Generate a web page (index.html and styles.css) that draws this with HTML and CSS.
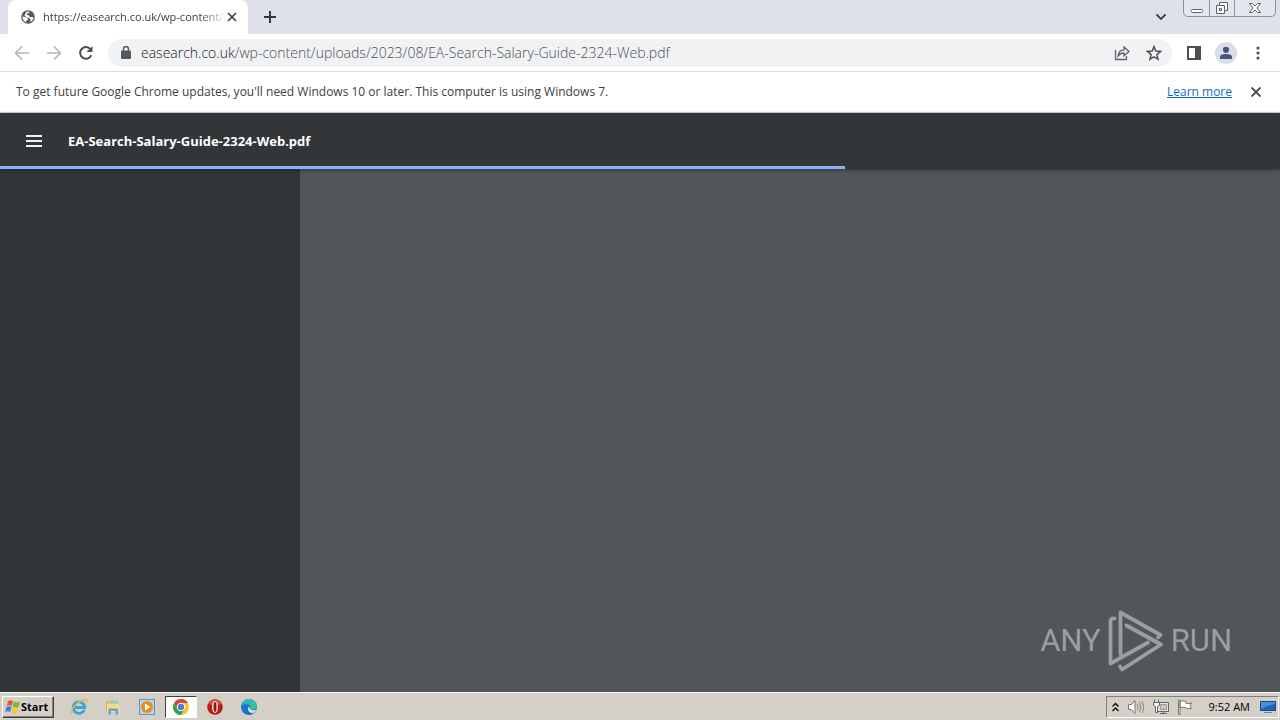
FILE: index.html
```html
<!DOCTYPE html>
<html lang="en">
<head>
<meta charset="utf-8">
<title>EA-Search-Salary-Guide-2324-Web.pdf</title>
<link rel="stylesheet" href="styles.css">
</head>
<body>
<header class="tabstrip">
  <div class="tab">
    <svg class="globe" width="14" height="14" viewBox="0 0 14 14"><circle cx="7" cy="7" r="6.800" fill="#55595e"/><path d="M1.500 6.500 5 7.200l2 1.600-.3 1.200-1.500.7.2 1.600C3 11.700 1.300 9.500 1.500 6.500ZM5.500 1.800 8.500 1.500 7.800 3 6 3.500 5.800 4.800 8 5.500 9 7.300 11 7l1.600.5c-.3 2-1.500 3.800-3.500 4.600l.6-2.300-2-2-2.500-.5-1.700-2Z" fill="#fff"/></svg>
    <span class="tab-title">https://easearch.co.uk/wp-content/</span>
    <button class="icon-btn tab-close" aria-label="Close tab"><svg width="10" height="10" viewBox="0 0 10 10"><path d="m1 1 8 8M9 1 1 9" stroke="#3c4043" stroke-width="1.700"/></svg></button>
  </div>
  <button class="icon-btn new-tab" aria-label="New tab"><svg width="14" height="14" viewBox="0 0 14 14"><path d="M7 1v12M1 7h12" stroke="#34383c" stroke-width="2"/></svg></button>
  <button class="icon-btn tab-search" aria-label="Search tabs"><svg width="12" height="8" viewBox="0 0 12 8"><path d="m1.500 1.500 4.500 4.500 4.500-4.500" fill="none" stroke="#3c4043" stroke-width="1.800"/></svg></button>
  <div class="window-controls">
    <button aria-label="Minimize"><svg width="14" height="14" viewBox="0 0 14 14"><rect x="1.500" y="8.500" width="11" height="3" rx="1" fill="#fff" stroke="#5e636b"/></svg></button>
    <button aria-label="Restore"><svg width="14" height="14" viewBox="0 0 14 14"><path d="M4.500 1.500h8v8h-3v3h-8v-8h3Z" fill="#fff" stroke="#5e636b"/><path d="M4.500 4.500h5v5M4.500 7.500h2v2h-2Z" fill="none" stroke="#5e636b"/></svg></button>
    <button class="wide" aria-label="Close"><svg width="14" height="14" viewBox="0 0 14 14"><path d="M1.500 2.500h3L7 5l2.500-2.500h3L9 7l3.500 4.500h-3L7 9l-2.500 2.500h-3L5 7Z" fill="#fff" stroke="#5e636b"/></svg></button>
  </div>
</header>
<nav class="toolbar">
  <button class="icon-btn" aria-label="Back"><svg width="16" height="16" viewBox="0 0 16 16"><path d="M15 8H2M8 1.500 1.500 8 8 14.500" fill="none" stroke="#b6b8bb" stroke-width="1.700"/></svg></button>
  <button class="icon-btn" aria-label="Forward"><svg width="16" height="16" viewBox="0 0 16 16"><path d="M1 8h13M8 1.500 14.500 8 8 14.500" fill="none" stroke="#b6b8bb" stroke-width="1.700"/></svg></button>
  <button class="icon-btn" aria-label="Reload"><svg width="16" height="16" viewBox="0 0 16 16"><path d="M13.300 10.200A5.800 5.800 0 1 1 12.500 4.300" fill="none" stroke="#4c5054" stroke-width="2"/><path d="M14.500 1v6h-6Z" fill="#4c5054"/></svg></button>
  <div class="omnibox">
    <svg width="10" height="13" viewBox="0 0 10 13"><rect y="4.500" width="10" height="8.500" rx="1" fill="#55595e"/><path d="M2.500 5V3a2.500 2.500 0 0 1 5 0v2" fill="none" stroke="#55595e" stroke-width="1.500"/></svg>
    <div class="url"><span class="host">easearch.co.uk</span>/wp-content/uploads/2023/08/EA-Search-Salary-Guide-2324-Web.pdf</div>
    <button class="icon-btn" aria-label="Share"><svg width="16" height="16" viewBox="0 0 16 16"><path d="M1.500 5v9.500h11V11" fill="none" stroke="#5f6368" stroke-width="1.300"/><path d="M4 11c.5-4 2.500-6 6-6.200V2l5 4.500-5 4.300V8C7.500 8 5.500 9 4 11Z" fill="none" stroke="#5f6368" stroke-width="1.300"/></svg></button>
    <button class="icon-btn" aria-label="Bookmark"><svg width="16" height="16" viewBox="0 0 16 16"><path d="m8 1.700 1.800 4.400 4.700.4-3.600 3.100 1.100 4.600L8 11.800l-4 2.400 1.100-4.600L1.500 6.500l4.700-.4Z" fill="none" stroke="#4c5054" stroke-width="1.500"/></svg></button>
  </div>
  <button class="icon-btn" aria-label="Side panel"><svg width="14" height="14" viewBox="0 0 14 14"><path d="M1 1h12v12H1Z" fill="#fff" stroke="#4c5054" stroke-width="2"/><path d="M8 1h5v12H8Z" fill="#4c5054"/></svg></button>
  <button class="icon-btn avatar" aria-label="Profile"><svg width="14" height="14" viewBox="0 0 14 14"><circle cx="7" cy="3.800" r="3.100" fill="#4a5677"/><path d="M1 13v-2C1 8.800 4 8 7 8s6 .8 6 3v2Z" fill="#4a5677"/></svg></button>
  <button class="icon-btn" aria-label="Menu"><svg width="4" height="14" viewBox="0 0 4 14"><g fill="#4c5054"><circle cx="2" cy="2" r="1.600"/><circle cx="2" cy="7" r="1.600"/><circle cx="2" cy="12" r="1.600"/></g></svg></button>
</nav>
<section class="infobar">
  <p>To get future Google Chrome updates, you'll need Windows 10 or later. This computer is using Windows 7.</p>
  <a href="#">Learn more</a>
  <button class="icon-btn" aria-label="Dismiss"><svg width="12" height="12" viewBox="0 0 12 12"><path d="m1.500 1.500 9 9M10.500 1.500l-9 9" stroke="#4c5054" stroke-width="1.800"/></svg></button>
</section>
<section class="pdf-bar">
  <button class="icon-btn" aria-label="Toggle sidebar"><svg width="16" height="12" viewBox="0 0 16 12"><path d="M0 1h16M0 6h16M0 11h16" stroke="#f1f3f4" stroke-width="2"/></svg></button>
  <h1>EA-Search-Salary-Guide-2324-Web.pdf</h1>
  <div class="progress"></div>
</section>
<main class="viewer">
  <aside class="sidebar"></aside>
  <div class="page-area">
    <div class="watermark">
      <span>ANY</span>
      <svg width="56" height="64" viewBox="0 0 56 64"><g fill="none" stroke="#9b9fa1" stroke-width="3.800" stroke-linejoin="round" stroke-linecap="round"><path d="M12.500 45V3.500L52.500 26 50 28.500"/><path d="M6.500 9.500Q2.500 8.500 2.500 13v41.500L40 33.500"/><path d="M18.500 16.500 53 35.500 14 60.500 12 57.500"/></g></svg>
      <span>RUN</span>
    </div>
  </div>
</main>
<footer class="taskbar">
  <button class="start"><svg width="16" height="16" viewBox="0 0 16 16"><path d="M3 2q2.500-1.500 5 0L6.800 7q-2.500-1.400-5 0Z" fill="#e8582c"/><path d="M9 2.500q2.500 1.600 6 .3L13.500 8q-3 1.200-5.700-.5Z" fill="#78b833"/><path d="M1.500 8q2.500-1.400 5 0L5.200 13q-2.500-1.500-5 0Z" fill="#3a83d3"/><path d="M7.500 8.600q2.700 1.600 5.700.4L11.800 14q-3 1.200-5.600-.6Z" fill="#f8c628"/></svg>Start</button>
  <button class="task" aria-label="Internet Explorer"><svg width="18" height="18" viewBox="0 0 18 18"><path d="M14.200 12A5.700 5.700 0 1 1 14.700 9.500H5" fill="none" stroke="#36a2df" stroke-width="2.800"/><path d="M2 16C-1 13 7 3 15 1.500c3-.3 2 3 1 4" fill="none" stroke="#e7b83c" stroke-width="1.300"/></svg></button>
  <button class="task" aria-label="Explorer"><svg width="18" height="18" viewBox="0 0 18 18"><path d="M2 3h5l1 1.500h7V14H2Z" fill="#dfb94c"/><path d="M3 5.500h12.500V14H3Z" fill="#f4dc88"/><path d="M7 2.500h7v3H7Z" fill="#8fc9ce"/><path d="M4.500 16.500v-6h9.500v6h-2.500V13H7v3.500Z" fill="#5fa9d4"/></svg></button>
  <button class="task" aria-label="Media Player"><svg width="18" height="18" viewBox="0 0 18 18"><rect x="1.500" y="1.500" width="15" height="15" fill="#b5d6ea" stroke="#5797c2"/><circle cx="9" cy="9" r="6" fill="#f08a1d"/><path d="m7 5.500 5.500 3.500L7 12.500Z" fill="#fff"/></svg></button>
  <button class="task active" aria-label="Chrome"><svg width="18" height="18" viewBox="0 0 18 18"><circle cx="9" cy="9" r="8" fill="#fbc62d"/><path d="M9 9 5.500 11 2.070 5A8 8 0 0 1 15.930 5H9Z" fill="#dd4436"/><path d="M2.070 5A8 8 0 0 0 9 17l3.500-6H5.500Z" fill="#2fa24f"/><circle cx="9" cy="9" r="4.200" fill="#fff"/><circle cx="9" cy="9" r="3.200" fill="#3f7fe0"/></svg></button>
  <button class="task" aria-label="Opera"><svg width="18" height="18" viewBox="0 0 18 18"><circle cx="9" cy="9" r="7.800" fill="#b81c19"/><path d="M2 6a8 8 0 0 1 14 0Q9 8 2 6Z" fill="#d4504b"/><ellipse cx="9" cy="9" rx="3" ry="6" fill="#f7e5df"/><ellipse cx="9" cy="9" rx="1.500" ry="5" fill="#971411"/></svg></button>
  <button class="task" aria-label="Edge"><svg width="18" height="18" viewBox="0 0 18 18"><circle cx="9" cy="9" r="8" fill="#1673c5"/><path d="M1 8C2 3 5.500 1 9 1c5 0 8 3.500 8 7 0 3-4 4.500-7 3 1-1.500 1-4-2-4.500C5 6 2.500 6.500 1 8Z" fill="#39c2a2"/><path d="M1 8c2-6 9-5.500 10.500-1.500C10 5.500 4 5 1 8Z" fill="#28a9dc"/><path d="M9.500 8c-1 3 3 5.500 7 3.500-1 1.700-2 3-3.500 3.700C9 15.500 6 11 9.500 8Z" fill="#d3e4ec"/></svg></button>
  <div class="tray">
    <svg width="7" height="10" viewBox="0 0 7 10"><path d="M.5 4.500 3.500 1.500l3 3M.5 9l3-3 3 3" fill="none" stroke="#111" stroke-width="1.500"/></svg>
    <svg width="18" height="16" viewBox="0 0 18 16"><path d="M1.500 5.500h3L8 1.500v13l-3.500-4h-3Z" fill="#fff" stroke="#777"/><path d="M10.500 5q1.500 3 0 6M12.500 3q3 5 0 10M15 2q3.500 6 0 12" fill="none" stroke="#888"/></svg>
    <svg width="16" height="16" viewBox="0 0 16 16"><path d="M4.500 3.500h11v9h-11ZM7 14.500h7M10.500 12.500v2" fill="#e4e2de" stroke="#666"/><path d="M7.500 5.500h6v5h-6Z" fill="#c8c6c2" stroke="#999"/><path d="M1.500.5v3M5.500.5v3M.5 3.500h6v3l-2 1v6h-2v-6l-2-1Z" fill="#fff" stroke="#666"/></svg>
    <svg width="16" height="16" viewBox="0 0 16 16"><path d="M1.500 1v14.500h1.500V1ZM3 2.500q3-1.500 6 0v1.800q3 1 6-.5l-2 3 1.500 2.500q-3 1-6-.5Q6 7.500 3 9Z" fill="#fff" stroke="#777"/></svg>
    <time>9:52 AM</time>
    <svg width="16" height="14" viewBox="0 0 16 14"><path d="M.5 1.500h15v9H.5Z" fill="#2565b8" stroke="#174887"/><path d="M1 2h14v2Q7 5 1 9Z" fill="#4f90d6"/><path d="M4 12.500h8" stroke="#5481b2"/></svg>
  </div>
</footer>
</body>
</html>
```
FILE: styles.css
```css
* { box-sizing: border-box; }
body {
  margin: 0;
  height: 100vh;
  display: flex;
  flex-direction: column;
  overflow: hidden;
  font: 12px/16px "Open Sans", "Noto Sans", sans-serif;
  color: #3c4043;
  background: #fff;
}
button { font: inherit; color: inherit; border: 0; padding: 0; background: none; }
svg { display: block; flex: none; }
.icon-btn { display: flex; align-items: center; justify-content: center; flex: none; }
.tabstrip { display: flex; height: 34px; flex: none; padding-left: 8px; background: #dee1e8; }
.tab {
  display: flex; align-items: center; width: 240px; padding: 0 11px 0 13px;
  background: #fff; border-radius: 8px 8px 0 0;
}
.tab-title {
  flex: 1; margin: 0 4px 0 8px; white-space: nowrap; font-size: 11px;
  mask-image: linear-gradient(to right, #000 88%, transparent 102%);
}
.new-tab { width: 44px; }
.tab-search { margin-left: auto; width: 44px; }
.window-controls {
  display: flex; height: 17px; margin-right: 4px; border: 1px solid #8d929a; border-top: 0;
  border-radius: 0 0 5px 5px; background: #e3e6ec; overflow: hidden;
}
.window-controls button { display: flex; align-items: center; justify-content: center; width: 25px; }
.window-controls button + button { border-left: 1px solid #8d929a; }
.window-controls .wide { width: 41px; }
.toolbar {
  display: flex; align-items: center; gap: 16px; height: 38px; flex: none;
  padding: 0 14px; border-bottom: 1px solid #dadce0;
}
.toolbar .icon-btn { width: 16px; }
.omnibox {
  display: flex; align-items: center; gap: 16px; flex: 1; height: 28px; min-width: 0;
  margin: 0 -2px; padding: 0 10px 0 13px; border-radius: 14px; background: #f0f2f4;
}
.url {
  flex: 1; min-width: 0; margin-left: -6px; overflow: hidden; white-space: nowrap;
  font-size: 14px; font-weight: 300; line-height: 20px; color: #4c5054;
}
.host { color: #202124; }
.toolbar .avatar { width: 22px; height: 22px; margin: 0 -3px; border-radius: 50%; background: #d9dee6; }
.infobar { display: flex; align-items: center; height: 41px; flex: none; padding: 0 18px 0 16px; border-bottom: 1px solid #dadce0; }
.infobar p { flex: 1; margin: 0; }
.infobar a { margin-right: 18px; color: #1769c5; }
.pdf-bar {
  position: relative; z-index: 1; display: flex; align-items: center; gap: 26px; height: 56px; flex: none;
  padding: 0 26px; background: #323639; box-shadow: 0 1px 4px rgba(0, 0, 0, .4);
}
.pdf-bar h1 { margin: 0; font-size: 13px; font-weight: 700; line-height: 20px; color: #fff; }
.progress { position: absolute; left: 0; bottom: 0; width: 66%; height: 3px; background: #8ab4f8; }
.viewer { display: flex; flex: 1; min-height: 0; }
.sidebar { width: 300px; flex: none; background: #323639; }
.page-area { position: relative; flex: 1; background: #525659; }
.watermark {
  position: absolute; right: 48px; bottom: 19px; display: flex; align-items: center; gap: 7px;
  font: 31px/64px Roboto, "Liberation Sans", sans-serif; color: #9b9fa1;
}
.taskbar {
  display: flex; align-items: center; height: 28px; flex: none; padding: 0 1px 0 2px;
  background: #d4d0c8; border-top: 1px solid #f5f4f1; font-size: 11px; color: #000;
}
.start {
  display: flex; align-items: center; height: 22px; width: 52px; margin-right: 9px; padding: 0 2px;
  border: 1px solid; border-color: #fff #404040 #404040 #fff; box-shadow: inset -1px -1px #808080; font-weight: 700;
}
.task { display: flex; align-items: center; justify-content: center; width: 32px; height: 22px; margin-right: 2px; }
.task.active { background: #fff; border: 1px solid; border-color: #404040 #fff #fff #404040; }
.tray {
  display: flex; align-items: center; gap: 8px; height: 22px; margin-left: auto; padding: 0 2px 0 5px;
  border: 1px solid; border-color: #808080 #fff #fff #808080;
}
.tray time { margin: 0 2px 0 8px; white-space: nowrap; }
```
